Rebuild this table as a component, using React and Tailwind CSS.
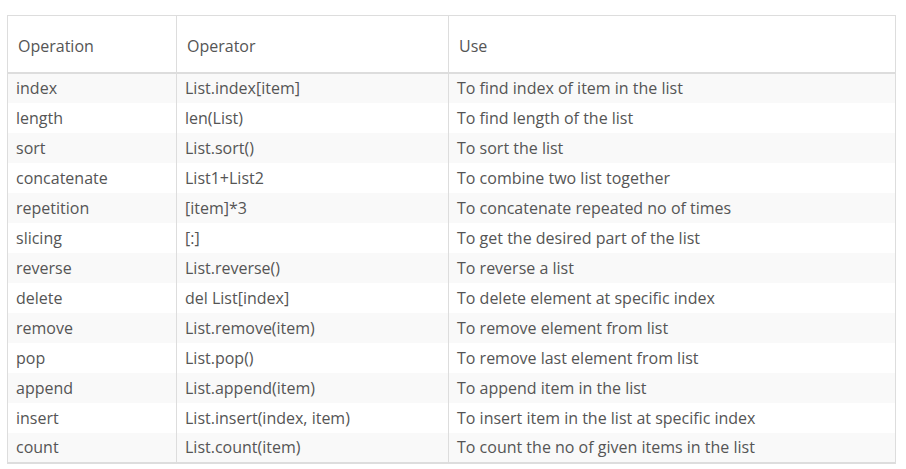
const rows = [
  ['index', 'List.index[item]', 'To find index of item in the list'],
  ['length', 'len(List)', 'To find length of the list'],
  ['sort', 'List.sort()', 'To sort the list'],
  ['concatenate', 'List1+List2', 'To combine two list together'],
  ['repetition', '[item]*3', 'To concatenate repeated no of times'],
  ['slicing', '[:]', 'To get the desired part of the list'],
  ['reverse', 'List.reverse()', 'To reverse a list'],
  ['delete', 'del List[index]', 'To delete element at specific index'],
  ['remove', 'List.remove(item)', 'To remove element from list'],
  ['pop', 'List.pop()', 'To remove last element from list'],
  ['append', 'List.append(item)', 'To append item in the list'],
  ['insert', 'List.insert(index, item)', 'To insert item in the list at specific index'],
  ['count', 'List.count(item)', 'To count the no of given items in the list'],
];

export default function App() {
  return (
    <div className="w-[906px] h-[469px] bg-white pt-[15px] pl-[7px] font-['Open_Sans',sans-serif] text-[16px] text-[#555]">
      <table className="w-[889px] border-collapse border border-[#ddd] border-b-2 table-fixed">
        <colgroup>
          <col className="w-[169px]" />
          <col className="w-[272px]" />
          <col />
        </colgroup>
        <thead>
          <tr className="h-[57px] border-b-2 border-[#ddd]">
            <th className="border-r border-[#ddd] font-normal text-left align-middle pl-[10px] pt-[4px]">Operation</th>
            <th className="border-r border-[#ddd] font-normal text-left align-middle pl-[10px] pt-[4px]">Operator</th>
            <th className="font-normal text-left align-middle pl-[10px] pt-[4px]">Use</th>
          </tr>
        </thead>
        <tbody>
          {rows.map((r, i) => (
            <tr key={r[0]} className={`h-[30px] ${i % 2 === 0 ? 'bg-[#f9f9f9]' : 'bg-white'}`}>
              <td className="border-r border-[#ddd] pl-[8px] align-middle leading-[20px]">{r[0]}</td>
              <td className="border-r border-[#ddd] pl-[8px] align-middle leading-[20px]">{r[1]}</td>
              <td className="pl-[8px] align-middle leading-[20px]">{r[2]}</td>
            </tr>
          ))}
        </tbody>
      </table>
    </div>
  );
}
